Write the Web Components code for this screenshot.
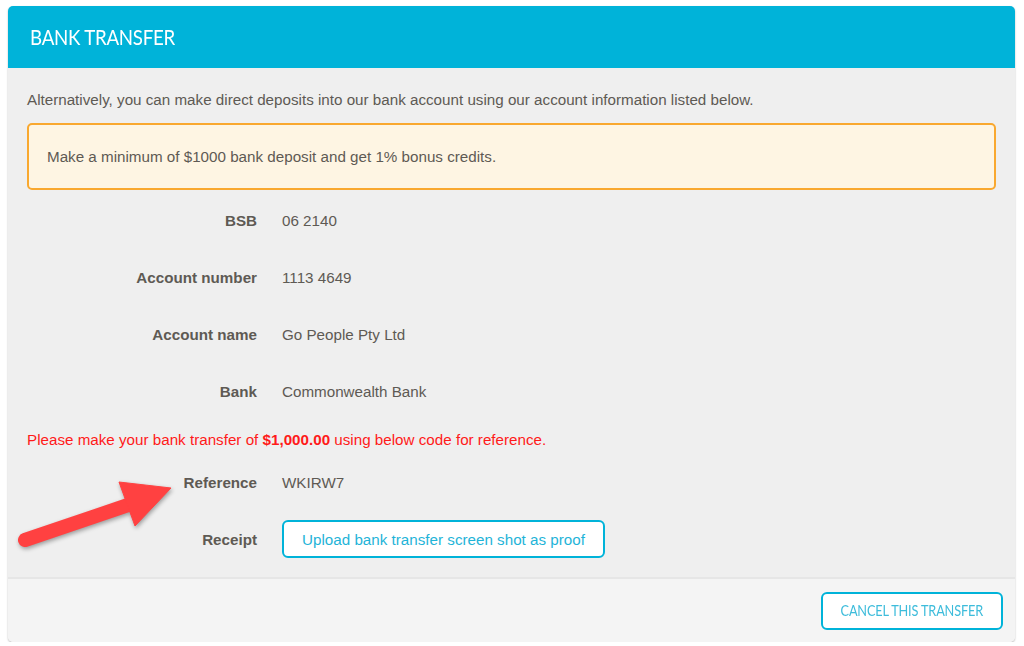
<!DOCTYPE html>
<html>
<head>
<meta charset="utf-8">
<title>Bank transfer</title>
<style>
  html, body { margin: 0; background: #fff; }
  body { font-family: "Liberation Sans", Arial, sans-serif; color: #5e5a54; }
</style>
</head>
<body>
<transfer-panel>
  <span slot="title">BANK TRANSFER</span>
  <p style="margin:0">Alternatively, you can make direct deposits into our bank account using our account information listed below.</p>
  <notice-box>Make a minimum of $1000 bank deposit and get 1% bonus credits.</notice-box>
  <info-row label="BSB">06 2140</info-row>
  <info-row label="Account number">1113 4649</info-row>
  <info-row label="Account name">Go People Pty Ltd</info-row>
  <info-row label="Bank">Commonwealth Bank</info-row>
  <red-note>Please make your bank transfer of <b>$1,000.00</b> using below code for reference.</red-note>
  <info-row label="Reference" class="ref">WKIRW7</info-row>
  <info-row label="Receipt" class="receipt"><outline-btn>Upload bank transfer screen shot as proof</outline-btn></info-row>
  <outline-btn slot="footer" kind="caps">CANCEL THIS TRANSFER</outline-btn>
  <arrow-mark slot="overlay"></arrow-mark>
</transfer-panel>

<script>
class TransferPanel extends HTMLElement {
  constructor() {
    super();
    this.attachShadow({ mode: "open" }).innerHTML = `
      <style>
        :host {
          display: block;
          position: relative;
          width: 1007px;
          height: 636px;
          margin: 6px 0 0 8px;
          background: #efefef;
          border-radius: 5px;
          box-shadow: 0 1px 2px rgba(0,0,0,.28);
          font-size: 15.2px;
          color: #5e5a54;
        }
        .head {
          height: 62px;
          box-sizing: border-box;
          padding: 0 22px;
          display: flex;
          align-items: center;
          background: #00b3d9;
          border-radius: 5px 5px 0 0;
          color: #fff;
          font: 400 22px/1 Lato, sans-serif;
          letter-spacing: -.3px;
        }
        .head span { display: inline-block; transform: scaleX(.85); transform-origin: left center; }
        .body {
          height: 509px;
          box-sizing: border-box;
          padding: 23px 19px 0;
        }
        .foot {
          height: 65px;
          box-sizing: border-box;
          padding: 0 12px 0 0;
          display: flex;
          align-items: center;
          justify-content: flex-end;
          background: #f4f4f4;
          border-top: 2px solid #e6e6e6;
          border-radius: 0 0 5px 5px;
        }
      </style>
      <div class="head"><span><slot name="title"></slot></span></div>
      <div class="body"><slot></slot></div>
      <div class="foot"><slot name="footer"></slot></div>
      <slot name="overlay"></slot>`;
  }
}
customElements.define("transfer-panel", TransferPanel);

class NoticeBox extends HTMLElement {
  constructor() {
    super();
    this.attachShadow({ mode: "open" }).innerHTML = `
      <style>
        :host {
          display: flex;
          align-items: center;
          box-sizing: border-box;
          height: 67px;
          margin: 15px 0 2px;
          padding: 0 18px;
          background: #fef5e3;
          border: 2px solid #f9a82f;
          border-radius: 5px;
        }
      </style>
      <slot></slot>`;
  }
}
customElements.define("notice-box", NoticeBox);

class InfoRow extends HTMLElement {
  constructor() {
    super();
    this.attachShadow({ mode: "open" }).innerHTML = `
      <style>
        :host {
          display: grid;
          grid-template-columns: 230px 1fr;
          column-gap: 25px;
          align-items: center;
          height: 57px;
        }
        :host(.ref) { height: 43px; }
        :host(.receipt) { height: 71px; }
        .label { text-align: right; font-weight: 700; }
      </style>
      <div class="label"></div>
      <div class="val"><slot></slot></div>`;
  }
  connectedCallback() {
    this.shadowRoot.querySelector(".label").textContent = this.getAttribute("label") || "";
  }
}
customElements.define("info-row", InfoRow);

class RedNote extends HTMLElement {
  constructor() {
    super();
    this.attachShadow({ mode: "open" }).innerHTML = `
      <style>
        :host { display: block; color: #ff1a1a; margin-top: 10px; line-height: 20px; padding-bottom: 10.5px; }
      </style>
      <slot></slot>`;
  }
}
customElements.define("red-note", RedNote);

class OutlineBtn extends HTMLElement {
  constructor() {
    super();
    this.attachShadow({ mode: "open" }).innerHTML = `
      <style>
        :host {
          display: inline-flex;
          align-items: center;
          justify-content: center;
          box-sizing: border-box;
          width: 323px;
          height: 38px;
          background: #fff;
          color: #1fb4d8;
          border: 2px solid #00b3d9;
          border-radius: 6px;
        }
        :host([kind=caps]) {
          width: 182px;
          color: #3dbcdb;
          font: 400 15px/1 Lato, sans-serif;
          letter-spacing: -.2px;
        }
        :host([kind=caps]) span { display: inline-block; transform: scaleX(.85); white-space: nowrap; }
      </style>
      <span><slot></slot></span>`;
  }
}
customElements.define("outline-btn", OutlineBtn);

class ArrowMark extends HTMLElement {
  constructor() {
    super();
    this.attachShadow({ mode: "open" }).innerHTML = `
      <style>
        :host { position: absolute; left: 8px; top: 468px; width: 170px; height: 90px; }
        svg { display: block; overflow: visible; filter: drop-shadow(1px 2px 2px rgba(0,0,0,.35)); }
      </style>
      <svg width="170" height="90" viewBox="0 0 170 90">
        <path d="M9 66 L115 30" stroke="#ff4141" stroke-width="14" stroke-linecap="round" fill="none"/>
        <path d="M103 8 L155 14 L119 52 Z" fill="#ff4141" stroke="#ff4141" stroke-linejoin="round"/>
      </svg>`;
  }
}
customElements.define("arrow-mark", ArrowMark);
</script>
</body>
</html>
